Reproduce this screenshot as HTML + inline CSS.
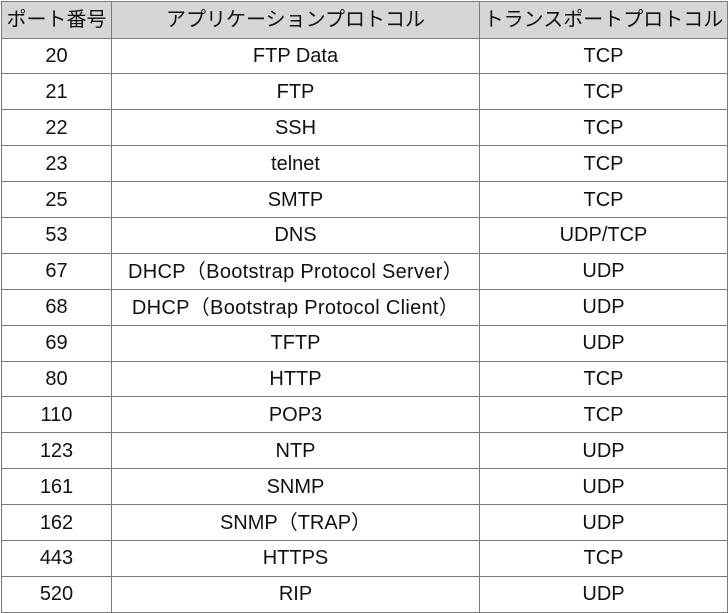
<!DOCTYPE html>
<html><head><meta charset="utf-8"><style>
body{margin:0;background:#fff;width:728px;height:613px;overflow:hidden;font-family:"Liberation Sans","Noto Sans CJK JP",sans-serif;}
table{position:absolute;left:1px;top:1px;border-collapse:collapse;table-layout:fixed;width:726px;}
td,th{border:1.5px solid #7a7a7a;text-align:center;font-size:20px;line-height:22px;color:#111;height:34.9px;padding:0;font-weight:normal;white-space:nowrap;overflow:hidden;vertical-align:middle}
td span{display:inline-block;line-height:22px;height:22px;vertical-align:middle}
th{background:#d6d6d6;font-size:20px;height:35.5px}
.w{letter-spacing:0.3px}
</style></head><body>
<table>
<colgroup><col style="width:110px"><col style="width:368px"><col style="width:248px"></colgroup>
<tr><th>ポート番号</th><th>アプリケーションプロトコル</th><th>トランスポートプロトコル</th></tr>
<tr><td>20</td><td>FTP Data</td><td>TCP</td></tr>
<tr><td>21</td><td>FTP</td><td>TCP</td></tr>
<tr><td>22</td><td>SSH</td><td>TCP</td></tr>
<tr><td>23</td><td>telnet</td><td>TCP</td></tr>
<tr><td>25</td><td>SMTP</td><td>TCP</td></tr>
<tr><td>53</td><td>DNS</td><td>UDP/TCP</td></tr>
<tr><td>67</td><td class="w"><span>DHCP（Bootstrap Protocol Server）</span></td><td>UDP</td></tr>
<tr><td>68</td><td class="w"><span>DHCP（Bootstrap Protocol Client）</span></td><td>UDP</td></tr>
<tr><td>69</td><td>TFTP</td><td>UDP</td></tr>
<tr><td>80</td><td>HTTP</td><td>TCP</td></tr>
<tr><td>110</td><td>POP3</td><td>TCP</td></tr>
<tr><td>123</td><td>NTP</td><td>UDP</td></tr>
<tr><td>161</td><td>SNMP</td><td>UDP</td></tr>
<tr><td>162</td><td><span>SNMP（TRAP）</span></td><td>UDP</td></tr>
<tr><td>443</td><td>HTTPS</td><td>TCP</td></tr>
<tr><td>520</td><td>RIP</td><td>UDP</td></tr>
</table>
</body></html>
